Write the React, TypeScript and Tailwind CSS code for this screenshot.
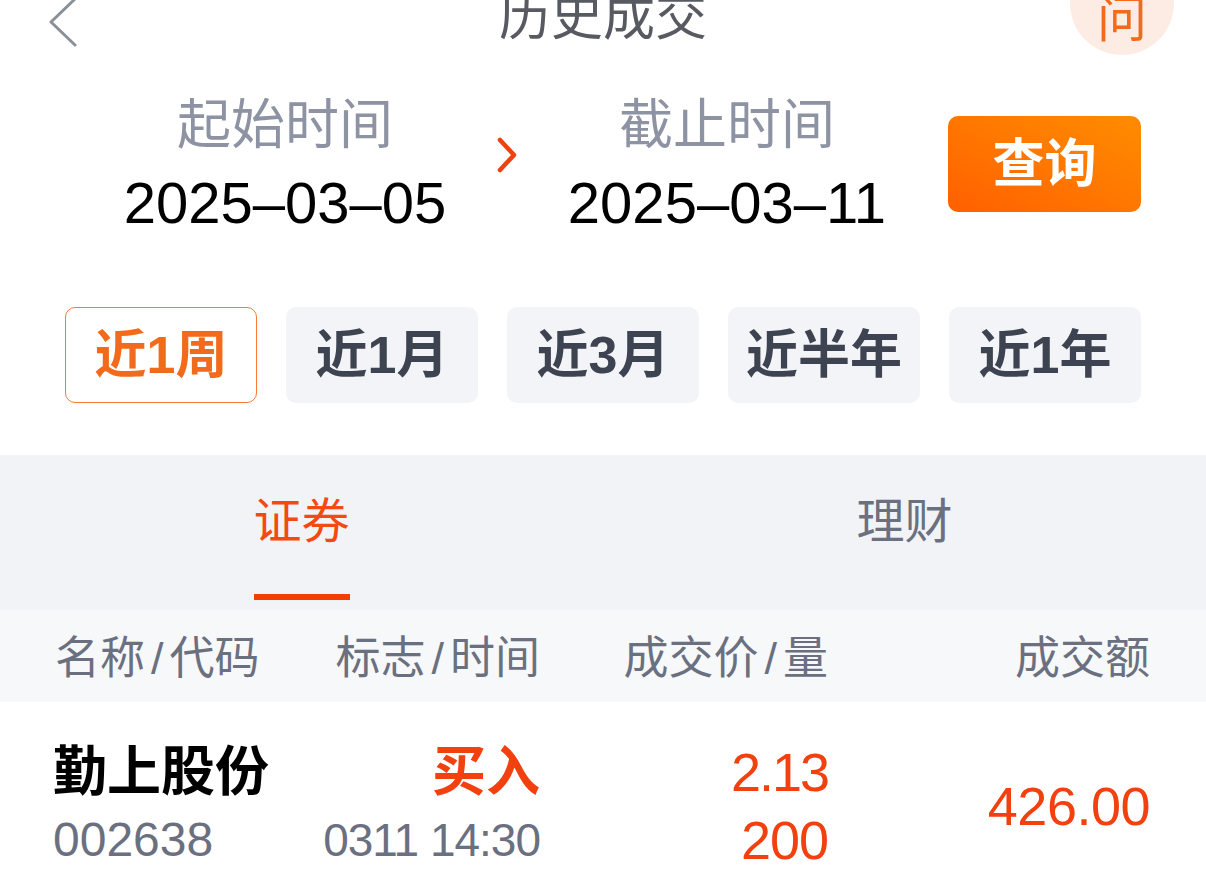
import React from 'react';

const periods = ['近1周', '近1月', '近3月', '近半年', '近1年'];

function BackIcon() {
  return (
    <svg width="30" height="50" viewBox="0 0 30 50" className="mt-[15px]" fill="none">
      <path d="M27 2 L3 25 L27 48" stroke="#8a8f99" strokeWidth="3" strokeLinecap="round" strokeLinejoin="round" />
    </svg>
  );
}

function ArrowIcon() {
  return (
    <svg width="20" height="36" viewBox="0 0 20 36" className="-mt-[18px]" fill="none">
      <path d="M3 3 L17 18 L3 33" stroke="#f0420f" strokeWidth="4.5" strokeLinecap="round" strokeLinejoin="round" />
    </svg>
  );
}

function DateCol({ label, value }: { label: string; value: string }) {
  return (
    <div className="w-[330px] flex flex-col items-center">
      <div className="pt-[3px] text-[54px] leading-[52px] text-[#8e93a3]">{label}</div>
      <div className="mt-[23px] text-[58px] leading-[58px] text-black">{value}</div>
    </div>
  );
}

function Slash() {
  return <span className="px-[6px]">/</span>;
}

export default function App() {
  return (
    <div className="w-[1206px] h-[883px] overflow-hidden bg-white font-['Liberation_Sans','Noto_Sans_CJK_SC',sans-serif]">
      {/* Header */}
      <div className="grid grid-cols-[1fr_auto_1fr] h-[60px] -mt-[18px]">
        <div className="pl-[48px]">
          <BackIcon />
        </div>
        <div className="flex items-center -mt-[3px] text-[52px] leading-none text-[#585a62]">历史成交</div>
        <div className="flex justify-end pr-[32px]">
          <div className="-mt-[31px] w-[104px] h-[104px] rounded-full bg-[#fdece3] flex items-end justify-center pb-[10px] text-[50px] leading-none text-[#f36a1c]">
            问
          </div>
        </div>
      </div>

      {/* Date range */}
      <div className="flex items-center mt-[54px] pl-[120px]">
        <DateCol label="起始时间" value="2025–03–05" />
        <div className="ml-[47px]">
          <ArrowIcon />
        </div>
        <div className="ml-[45px]">
          <DateCol label="截止时间" value="2025–03–11" />
        </div>
        <button className="ml-[56px] w-[193px] h-[96px] rounded-[10px] bg-linear-to-tr from-[#ff5f00] to-[#ff8c00] text-white text-[52px] leading-none font-bold flex items-center justify-center">
          查询
        </button>
      </div>

      {/* Period chips */}
      <div className="mt-[75px] flex gap-[29px] px-[65px]">
        {periods.map((p, i) => (
          <div
            key={p}
            className={
              i === 0
                ? 'w-[192px] h-[96px] rounded-[10px] border-[1.5px] border-[#f47a35] bg-white text-[#f26a1b] flex items-center justify-center text-[52px] leading-none font-bold'
                : 'w-[192px] h-[96px] rounded-[10px] bg-[#f3f4f7] text-[#3e4352] flex items-center justify-center text-[52px] leading-none font-bold'
            }
          >
            {p}
          </div>
        ))}
      </div>

      {/* Tabs */}
      <div className="mt-[52px] h-[155px] bg-[#f2f3f6] flex">
        <div className="flex-1 flex flex-col items-center pt-[43px]">
          <div className="text-[48px] leading-none text-[#f24a12]">证券</div>
          <div className="mt-[48px] w-[96px] h-[6px] bg-[#f33d05]" />
        </div>
        <div className="flex-1 flex flex-col items-center pt-[43px]">
          <div className="text-[48px] leading-none text-[#6b7080]">理财</div>
        </div>
      </div>

      {/* Column header */}
      <div className="h-[92px] bg-[#f7f8fa] grid grid-cols-[265px_220px_288px_1fr] items-center pt-[5px] pl-[55px] pr-[56px] text-[45px] leading-none text-[#6b7080] whitespace-nowrap">
        <div>名称<Slash />代码</div>
        <div className="text-right">标志<Slash />时间</div>
        <div className="text-right">成交价<Slash />量</div>
        <div className="text-right">成交额</div>
      </div>

      {/* Row */}
      <div className="pt-[36px] grid grid-cols-[265px_220px_288px_1fr] items-center pl-[55px] pr-[56px] whitespace-nowrap">
        <div className="flex flex-col -ml-[2px]">
          <div className="h-[68px] text-[54px] leading-[68px] font-bold text-black">勤上股份</div>
          <div className="h-[68px] text-[48px] leading-[68px] text-[#6b7080]">002638</div>
        </div>
        <div className="flex flex-col items-end">
          <div className="h-[68px] text-[54px] leading-[68px] font-bold text-[#f2400f]">买入</div>
          <div className="h-[68px] text-[46px] leading-[68px] tracking-[-1px] text-[#6b7080]">0311 14:30</div>
        </div>
        <div className="flex flex-col items-end">
          <div className="h-[68px] text-[54px] leading-[68px] tracking-[-2px] text-[#f2400f]">2.13</div>
          <div className="h-[68px] text-[54px] leading-[68px] tracking-[-1px] text-[#f2400f]">200</div>
        </div>
        <div className="text-right text-[54px] leading-none tracking-[-0.5px] text-[#f2400f]">426.00</div>
      </div>
    </div>
  );
}
